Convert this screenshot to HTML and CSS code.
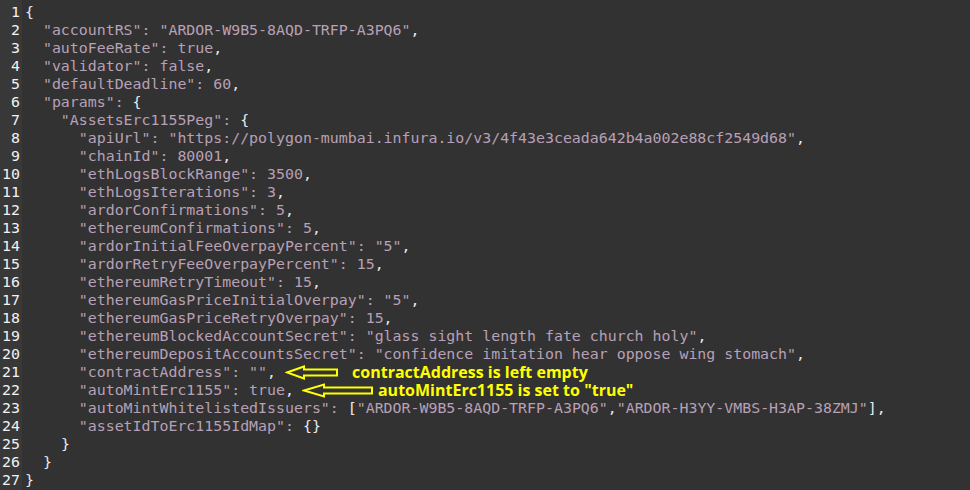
FILE: index.html
```html
<!DOCTYPE html>
<html lang="en">
<head>
    <meta charset="UTF-8">
    <title>config.json</title>
    <link rel="stylesheet" href="styles.css">
</head>
<body>
    <div class="editor">
        <div class="gutter">
            <div>1</div><div>2</div><div>3</div><div>4</div><div>5</div><div>6</div><div>7</div><div>8</div><div>9</div>
            <div>10</div><div>11</div><div>12</div><div>13</div><div>14</div><div>15</div><div>16</div><div>17</div><div>18</div>
            <div>19</div><div>20</div><div>21</div><div>22</div><div>23</div><div>24</div><div>25</div><div>26</div><div>27</div>
        </div>
        <div class="code">
<div class="ln"><span class="p">{</span></div>
<div class="ln">  "accountRS": "ARDOR-W9B5-8AQD-TRFP-A3PQ6"<span class="p">,</span></div>
<div class="ln">  "autoFeeRate": true<span class="p">,</span></div>
<div class="ln">  "validator": false<span class="p">,</span></div>
<div class="ln">  "defaultDeadline": 60<span class="p">,</span></div>
<div class="ln">  "params": <span class="p">{</span></div>
<div class="ln">    "AssetsErc1155Peg": <span class="p">{</span></div>
<div class="ln">      "apiUrl": "https://polygon-mumbai.infura.io/v3/4f43e3ceada642b4a002e88cf2549d68"<span class="p">,</span></div>
<div class="ln">      "chainId": 80001<span class="p">,</span></div>
<div class="ln">      "ethLogsBlockRange": 3500<span class="p">,</span></div>
<div class="ln">      "ethLogsIterations": 3<span class="p">,</span></div>
<div class="ln">      "ardorConfirmations": 5<span class="p">,</span></div>
<div class="ln">      "ethereumConfirmations": 5<span class="p">,</span></div>
<div class="ln">      "ardorInitialFeeOverpayPercent": "5"<span class="p">,</span></div>
<div class="ln">      "ardorRetryFeeOverpayPercent": 15<span class="p">,</span></div>
<div class="ln">      "ethereumRetryTimeout": 15<span class="p">,</span></div>
<div class="ln">      "ethereumGasPriceInitialOverpay": "5"<span class="p">,</span></div>
<div class="ln">      "ethereumGasPriceRetryOverpay": 15<span class="p">,</span></div>
<div class="ln">      "ethereumBlockedAccountSecret": "glass sight length fate church holy"<span class="p">,</span></div>
<div class="ln">      "ethereumDepositAccountsSecret": "confidence imitation hear oppose wing stomach"<span class="p">,</span></div>
<div class="ln">      "contractAddress": ""<span class="p">,</span><span class="note note-1"><svg class="arrow" width="54" height="15" viewBox="0 0 54 15"><path d="M2 7.5 L19 1.5 V4.5 H52 V10.5 H19 V13.5 Z"/></svg><span class="note-text">contractAddress is left empty</span></span></div>
<div class="ln">      "autoMintErc1155": true<span class="p">,</span><span class="note note-2"><svg class="arrow" width="72" height="15" viewBox="0 0 72 15"><path d="M2 7.5 L22 1.5 V4.5 H70 V10.5 H22 V13.5 Z"/></svg><span class="note-text">autoMintErc1155 is set to "true"</span></span></div>
<div class="ln">      "autoMintWhitelistedIssuers": <span class="p">[</span>"ARDOR-W9B5-8AQD-TRFP-A3PQ6"<span class="p">,</span>"ARDOR-H3YY-VMBS-H3AP-38ZMJ"<span class="p">],</span></div>
<div class="ln">      "assetIdToErc1155IdMap": <span class="p">{}</span></div>
<div class="ln">    <span class="p">}</span></div>
<div class="ln">  <span class="p">}</span></div>
<div class="ln"><span class="p">}</span></div>
        </div>
    </div>
</body>
</html>
```

FILE: styles.css
```css
* {
    box-sizing: border-box;
    margin: 0;
    padding: 0;
}

body {
    width: 970px;
    height: 490px;
    overflow: hidden;
    background-color: #333333;
    font-family: 'DejaVu Sans Mono', monospace;
    font-size: 14.9px;
}

.editor {
    display: flex;
    height: 490px;
}

.gutter {
    width: 22px;
    padding-top: 3px;
    padding-right: 2px;
    background-color: #383838;
    color: #f2f2f2;
    text-align: right;
    line-height: 18px;
}

.code {
    flex: 1;
    padding-top: 3px;
    padding-left: 3px;
    background-color: #323232;
    color: #b8a0b6;
    line-height: 18px;
}

.ln {
    height: 18px;
    white-space: pre;
}

.p {
    color: #e6eaef;
}

.note {
    display: inline-flex;
    align-items: center;
    height: 18px;
    vertical-align: top;
}

.note-1 {
    margin-left: 9px;
}

.note-1 .note-text {
    margin-left: 13px;
}

.note-2 {
    margin-left: 8px;
}

.note-2 .note-text {
    margin-left: 4px;
}

.arrow path {
    fill: #333333;
    stroke: #ffff00;
    stroke-width: 2;
    stroke-linejoin: miter;
}

.note-text {
    font-family: 'Open Sans', sans-serif;
    font-weight: 700;
    font-size: 16px;
    line-height: 18px;
    color: #ffff00;
    white-space: pre;
}
```
